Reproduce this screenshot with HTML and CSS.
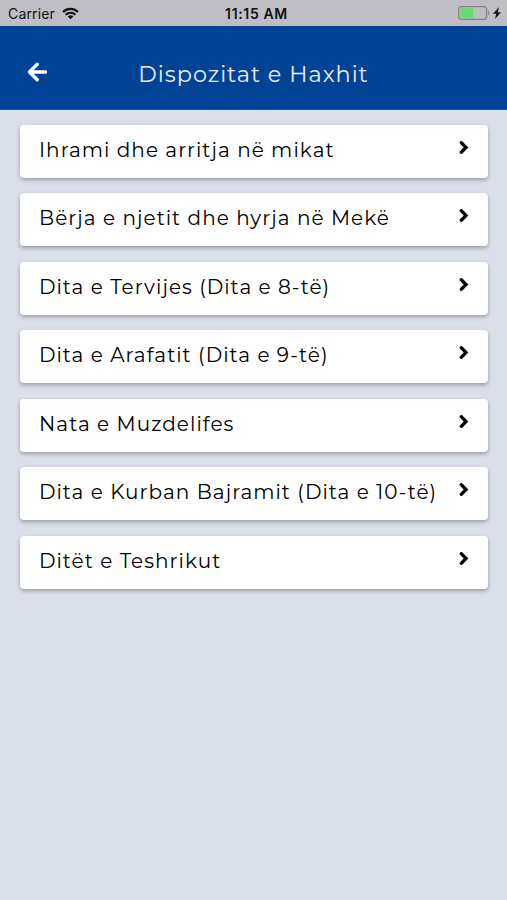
FILE: index.html
```html
<!DOCTYPE html>
<html lang="sq">
<head>
<meta charset="utf-8">
<meta name="viewport" content="width=device-width">
<title>Dispozitat e Haxhit</title>
<link rel="stylesheet" href="styles.css">
</head>
<body>
<div class="status">
  <div class="carrier"><span>Carrier</span>
    <svg class="wifi" width="17" height="13" viewBox="0 0 18 13"><g fill="none" stroke="#111" stroke-width="2.3"><path d="M1.1 4.9a11.2 11.2 0 0 1 15.8 0"/><path d="M3.9 7.8a7.2 7.2 0 0 1 10.2 0"/></g><path d="M9 12.7 6.1 9.8a4.1 4.1 0 0 1 5.8 0z" fill="#111"/></svg>
  </div>
  <div class="time">11:15 AM</div>
  <div class="power">
    <svg width="46" height="16" viewBox="0 0 46 16"><rect x="1.6" y="1.6" width="28" height="12.8" rx="3" fill="none" stroke="#858589" stroke-width="1.3"/><rect x="3.2" y="3.2" width="12.8" height="9.6" rx="1" fill="#5ce06a"/><path d="M31 5.5q2.8 2.5 0 5z" fill="#858589"/><path d="M42 2l-6 6.8h3.3L38 14l6-6.8h-3.3z" fill="#111"/></svg>
  </div>
</div>
<header class="header">
  <svg class="back" width="20" height="20" viewBox="0 0 20 20"><path d="M10.2 2.200 2.500 10l7.700 7.800M2.900 10H18.500"/></svg>
  <h1 class="title">Dispozitat e Haxhit</h1>
</header>
<main class="list">
  <a class="card"><span class="label">Ihrami dhe arritja në mikat</span><svg class="chevron" width="10" height="13" viewBox="0 0 10 13"><path d="M2.300 1.700L7 6.500L2.300 11.300"/></svg></a>
  <a class="card"><span class="label">Bërja e njetit dhe hyrja në Mekë</span><svg class="chevron" width="10" height="13" viewBox="0 0 10 13"><path d="M2.300 1.700L7 6.500L2.300 11.300"/></svg></a>
  <a class="card"><span class="label">Dita e Tervijes (Dita e 8-të)</span><svg class="chevron" width="10" height="13" viewBox="0 0 10 13"><path d="M2.300 1.700L7 6.500L2.300 11.300"/></svg></a>
  <a class="card"><span class="label">Dita e Arafatit (Dita e 9-të)</span><svg class="chevron" width="10" height="13" viewBox="0 0 10 13"><path d="M2.300 1.700L7 6.500L2.300 11.300"/></svg></a>
  <a class="card"><span class="label">Nata e Muzdelifes</span><svg class="chevron" width="10" height="13" viewBox="0 0 10 13"><path d="M2.300 1.700L7 6.500L2.300 11.300"/></svg></a>
  <a class="card"><span class="label">Dita e Kurban Bajramit (Dita e 10-të)</span><svg class="chevron" width="10" height="13" viewBox="0 0 10 13"><path d="M2.300 1.700L7 6.500L2.300 11.300"/></svg></a>
  <a class="card"><span class="label">Ditët e Teshrikut</span><svg class="chevron" width="10" height="13" viewBox="0 0 10 13"><path d="M2.300 1.700L7 6.500L2.300 11.300"/></svg></a>
</main>
</body>
</html>
```
FILE: styles.css
```css
* { box-sizing: border-box; }
body { margin: 0; height: 900px; background: #dbdfea; font-family: Montserrat, Inter, "Liberation Sans", sans-serif; color: #000; overflow: hidden; }
.status { height: 25.5px; background: #bfbec4; color: #111; display: grid; grid-template-columns: 1fr auto 1fr; align-items: center; padding: 1px 4px 0 8px; font-family: Inter, sans-serif; font-size: 14px; }
.carrier { display: flex; align-items: center; gap: 7px; letter-spacing: 0.15px; }
.time { font-weight: 600; padding-left: 2px; letter-spacing: 0.65px; }
.power { display: flex; justify-content: flex-end; }
.header { height: 84px; background: #004296; display: grid; grid-template-columns: 27px 20px 1fr 47px; align-items: center; padding-top: 9px; border-bottom: 1px solid #1f57a2; }
.back { grid-column: 2; fill: none; stroke: #fff; stroke-width: 3.4; stroke-linecap: round; stroke-linejoin: round; }
.title { margin: 5px 0 0; text-align: center; white-space: nowrap; color: #e9effa; font-size: 22.4px; line-height: 28px; font-weight: 400; letter-spacing: 1px; }
.list { padding: 15.5px 19px 0 20px; display: flex; flex-direction: column; gap: 15.45px; }
.card { height: 53px; background: #fff; border-radius: 4px; display: flex; justify-content: space-between; padding: 0 19px; box-shadow: 0 2px 4px rgba(0,0,0,.3); }
.label { font-size: 20px; line-height: 51.4px; letter-spacing: 1.05px; white-space: nowrap; }
.chevron { margin-top: 16px; fill: none; stroke: #000; stroke-width: 3.3; stroke-linecap: round; stroke-linejoin: miter; }
```
